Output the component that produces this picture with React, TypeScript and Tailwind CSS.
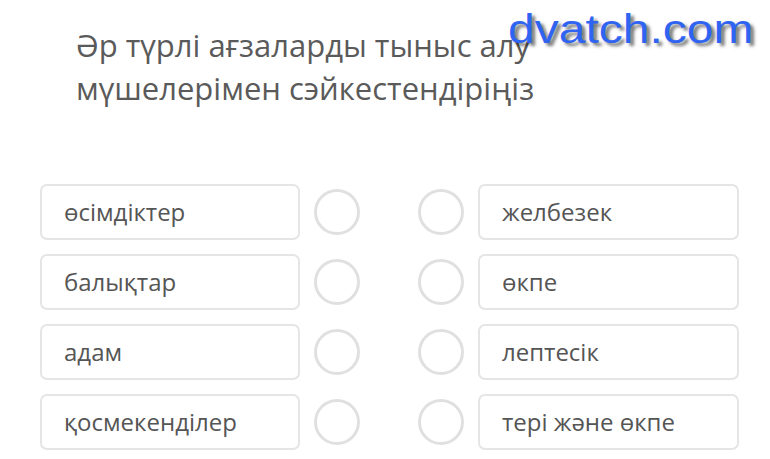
const left = ["өсімдіктер", "балықтар", "адам", "қосмекенділер"];
const right = ["желбезек", "өкпе", "лептесік", "тері және өкпе"];

function Circle() {
  return <div className="w-[46px] h-[46px] rounded-full border-[3px] border-[#e0e0e0] shrink-0" />;
}

export default function App() {
  return (
    <div className="relative w-[770px] h-[459px] bg-white overflow-hidden font-['Open_Sans',sans-serif] text-[#555]">
      <div className="pl-[76px] pt-[24px] text-[31px] leading-[43px] text-[#5a5a5a]">
        <div>Әр түрлі ағзаларды тыныс алу</div>
        <div>мүшелерімен сэйкестендіріңіз</div>
      </div>

      <div className="mt-[74px] flex flex-col gap-[14px] pl-[40px]">
        {left.map((l, i) => (
          <div key={l} className="flex items-center h-[56px]">
            <div className="w-[260px] h-[56px] rounded-[7px] border-2 border-[#e5e5e5] flex items-center pl-[22px] text-[24px]">
              {l}
            </div>
            <div className="ml-[14px]">
              <Circle />
            </div>
            <div className="ml-[58px]">
              <Circle />
            </div>
            <div className="ml-[14px] w-[261px] h-[56px] rounded-[7px] border-2 border-[#e5e5e5] flex items-center pl-[22px] text-[24px]">
              {right[i]}
            </div>
          </div>
        ))}
      </div>

      <div className="absolute left-[508px] top-[9px] origin-left scale-x-[1.2] font-['Liberation_Sans',Arial,sans-serif] text-[40px] leading-none text-[#2f63f2] [text-shadow:3px_3px_3px_rgba(0,0,0,0.55)]">
        dvatch.com
      </div>
    </div>
  );
}
